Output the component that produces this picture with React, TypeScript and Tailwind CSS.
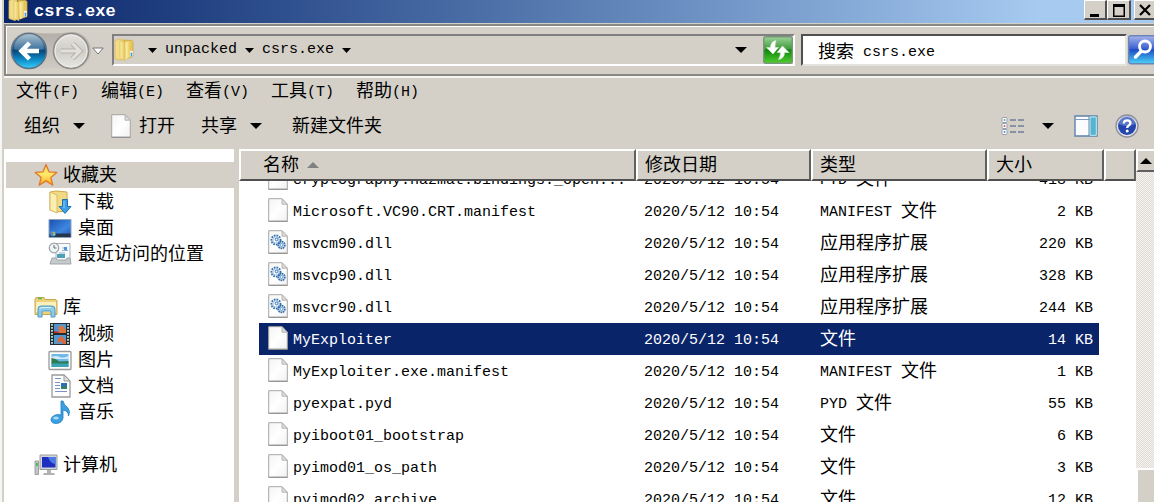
import React from 'react';
import { clsx } from 'clsx';

interface FileEntry {
  name: string;
  type: string;
  size: string;
  icon?: 'page' | 'dll';
  selected?: boolean;
}

interface NavItem {
  label: string;
  icon: React.ReactNode;
}

interface NavGroup extends NavItem {
  active?: boolean;
  items: NavItem[];
}

const files: FileEntry[] = [
  { name: 'cryptography.hazmat.bindings._open...', type: 'PYD 文件', size: '418 KB' },
  { name: 'Microsoft.VC90.CRT.manifest', type: 'MANIFEST 文件', size: '2 KB' },
  { name: 'msvcm90.dll', type: '应用程序扩展', size: '220 KB', icon: 'dll' },
  { name: 'msvcp90.dll', type: '应用程序扩展', size: '328 KB', icon: 'dll' },
  { name: 'msvcr90.dll', type: '应用程序扩展', size: '244 KB', icon: 'dll' },
  { name: 'MyExploiter', type: '文件', size: '14 KB', selected: true },
  { name: 'MyExploiter.exe.manifest', type: 'MANIFEST 文件', size: '1 KB' },
  { name: 'pyexpat.pyd', type: 'PYD 文件', size: '55 KB' },
  { name: 'pyiboot01_bootstrap', type: '文件', size: '6 KB' },
  { name: 'pyimod01_os_path', type: '文件', size: '3 KB' },
  { name: 'pyimod02_archive', type: '文件', size: '12 KB' },
];

const modified = '2020/5/12 10:54';

const menus = ['文件(F)', '编辑(E)', '查看(V)', '工具(T)', '帮助(H)'];

// Chinese runs are set larger than the monospaced Latin ones
const Label: React.FC<{ text: string }> = ({ text }) => (
  <span className="pt-0.5">
    {text.split(/([\u4e00-\u9fff]+)/).filter(Boolean).map((part, i) => (
      <span key={i} className={/[\u4e00-\u9fff]/.test(part) ? 'align-[-1px] text-[18px]' : 'text-[15px]'}>
        {part}
      </span>
    ))}
  </span>
);

const Caret: React.FC<{ small?: boolean }> = ({ small }) => (
  <svg className={small ? 'h-[5px] w-[9px]' : 'h-[6px] w-[12px]'} viewBox="0 0 12 6" preserveAspectRatio="none">
    <path d="M0 0h12L6 6z" fill="#000" />
  </svg>
);

const FolderIcon: React.FC<{ className?: string }> = ({ className }) => (
  <svg className={className} viewBox="0 0 20 24">
    <defs>
      <linearGradient id="folderFront" x1="0" x2="1">
        <stop offset="0" stopColor="#fdf3b4" />
        <stop offset="1" stopColor="#e6c14c" />
      </linearGradient>
    </defs>
    <path d="M1 2.500l5-1.500 3 1v19l-2 1.500-6-2z" fill="#f3dc86" stroke="#d8bb5c" strokeWidth=".8" />
    <path d="M10 2l8 .5 1 1v15l-7 2.500z" fill="#e9c85c" stroke="#cba640" strokeWidth=".8" />
    <path d="M6 2.500l5 2v18l-5-2z" fill="url(#folderFront)" stroke="#dcbf60" strokeWidth=".8" />
    <path d="M11.500 4.500l5.500-2v16l-5.500 3z" fill="url(#folderFront)" />
    <path d="M17.500 13v5.500" stroke="#fff" strokeWidth="2.600" />
    <path d="M17.500 14.500v4" stroke="#3d9ddc" strokeWidth="1.600" />
  </svg>
);

const PageIcon: React.FC<{ className?: string; dll?: boolean }> = ({ className, dll }) => (
  <svg className={className} viewBox="0 0 20 24">
    <defs>
      <linearGradient id="pageFill" x1="0" y1="0" x2="1" y2="1">
        <stop offset="0" stopColor="#f4f4f4" />
        <stop offset=".5" stopColor="#fff" />
        <stop offset="1" stopColor="#f1f1f1" />
      </linearGradient>
    </defs>
    <path d="M.7.7H14l5.3 5.5v17H.7z" fill="url(#pageFill)" stroke="#a6a6a6" />
    <path d="M14 .7v5.5h5.3z" fill="#dcdcdc" stroke="#b4b4b4" />
    <path d="M.5 23.3h19" stroke="#8b8b8b" />
    {dll && (
      <g fill="none" stroke="#2f70b0">
        <circle cx="8" cy="10" r="4.6" strokeWidth="1.8" strokeDasharray="1.7 1" />
        <circle cx="8" cy="10" r="3.2" strokeWidth=".8" stroke="#7fa9d2" />
        <circle cx="8.500" cy="9.500" r="1.3" />
        <circle cx="13.500" cy="15" r="3.3" strokeWidth="1.800" strokeDasharray="1.600 .6" />
        <circle cx="13.500" cy="15" r="1.500" stroke="#5b92c8" />
      </g>
    )}
  </svg>
);

const StarIcon = () => (
  <svg className="size-6" viewBox="0 0 24 24">
    <defs>
      <linearGradient id="star" x1="0" y1="0" x2="0" y2="1">
        <stop offset="0" stopColor="#ffd25a" />
        <stop offset=".5" stopColor="#ffe86a" />
        <stop offset="1" stopColor="#ffa41a" />
      </linearGradient>
    </defs>
    <path d="M12 1.5l3 7.3 7.8.6-6 5 2 7.8-6.8-4.3-6.800 4.300 2-7.800-6-5 7.800-.6z" fill="url(#star)" stroke="#e0782a" strokeWidth="1.300" strokeLinejoin="round" />
  </svg>
);

const DownloadsIcon = () => (
  <svg className="size-6" viewBox="0 0 24 24">
    <path d="M2 2l6-1 11 1v19l-11 1-6-2z" fill="#f2da85" stroke="#cba94a" />
    <path d="M2 2l7 3v18l-7-3z" fill="#fbeeb2" stroke="#d2b355" strokeWidth=".8" />
    <path d="M14.500 9.500h5v7h3.500L17 23.500l-6-7h3.500z" fill="#3f9fe4" stroke="#1d6fb8" />
    <path d="M16 11v7" stroke="#8ccdf5" />
  </svg>
);

const DesktopIcon = () => (
  <svg className="size-6" viewBox="0 0 24 24">
    <defs>
      <linearGradient id="desk" x1="0" y1="0" x2="1" y2="1">
        <stop offset="0" stopColor="#1a4fb0" />
        <stop offset=".6" stopColor="#3e86e0" />
        <stop offset="1" stopColor="#2058b8" />
      </linearGradient>
    </defs>
    <path d="M1 3.500h22v18H1z" fill="url(#desk)" stroke="#8fa3bb" />
    <path d="M1.500 17.500h21V21h-21z" fill="#27364e" />
    <circle cx="5" cy="17.500" r="3" fill="#3a8fd0" />
    <path d="M3.500 16h1.500v1.500H3.500z" fill="#f26a35" />
    <path d="M5.300 16h1.500v1.500H5.300z" fill="#a3d95a" />
    <path d="M5.300 18h1.500v1.300H5.300z" fill="#ffd54a" />
  </svg>
);

const RecentIcon = () => (
  <svg className="size-6" viewBox="0 0 24 24">
    <path d="M8 1.500h14v18H8z" fill="#f8fafb" stroke="#a9b0b5" />
    <path d="M14 6h4M14 8.500h6M11 11h6" stroke="#8fb4d0" />
    <path d="M16 5h3v3h-3z" fill="#4c93dc" />
    <path d="M9 12h8v4H9z" fill="#4da0b8" />
    <path d="M2 22l2-6h4l1 2h9l1-2h3l1 6z" fill="#c5c9cc" stroke="#a1a6aa" />
    <circle cx="6" cy="6" r="4.800" fill="#f1f4f6" stroke="#9ba4aa" strokeWidth="1.200" />
    <path d="M6 3v3h2.500" stroke="#5d6a74" fill="none" />
  </svg>
);

const LibraryIcon = () => (
  <svg className="size-6" viewBox="0 0 24 24">
    <path d="M1 4.500l1-2h8l1 2h11l1 1v14H1z" fill="#ecd27a" stroke="#c7a750" />
    <path d="M2 7h20v10H2z" fill="#fbefbb" />
    <path d="M4 3.500h4" stroke="#57b84a" strokeWidth="1.500" />
    <path d="M4 22v-8q0-3 3-3h11q3 0 3 3v8h-4v-5q0-1-1-1H9q-1 0-1 1v5z" fill="#8dcbe8" stroke="#4e9ac2" />
    <path d="M6 14q0-1.500 2-1.500h9" stroke="#d5f0fb" fill="none" />
  </svg>
);

const VideoIcon = () => (
  <svg className="size-6" viewBox="0 0 24 24">
    <path d="M2 1h20v22H2z" fill="#252b30" />
    <path d="M6 2h12v9H6zM6 13h12v9H6z" fill="#4c9bd6" />
    <path d="M6 2h3l3 4 6 1v4H6z" fill="#5a8fc4" />
    <path d="M11 5l3-2 4 5v3h-7z" fill="#e0743e" />
    <path d="M9 22l1-6 4-2 4 5v3h-3l-2-3z" fill="#d9683a" />
    <path d="M6 9l5 1v1H6z" fill="#c92c2c" />
    <path d="M4 2v21M20 2v21" stroke="#a9d3cc" strokeWidth="2" strokeDasharray="1.800 1.200" />
  </svg>
);

const PictureIcon = () => (
  <svg className="size-6" viewBox="0 0 24 24">
    <rect x="1" y="3.500" width="22" height="18" rx="1" fill="#fdfdfd" stroke="#9a9a9a" strokeWidth="1.300" />
    <path d="M3.500 6h17v13h-17z" fill="#6fb8ea" />
    <path d="M3.500 9q5-2 8 0t9-1v3h-17z" fill="#d3ecf8" />
    <path d="M3.500 10q4 0 8 3.500l9-.5v3h-17z" fill="#2c7d50" />
    <path d="M3.500 15.500h17V19h-17z" fill="#3aa3b4" />
  </svg>
);

const DocumentIcon = () => (
  <svg className="size-6" viewBox="0 0 24 24">
    <path d="M4 1h12l6 6v16H4z" fill="#fdfdfd" stroke="#9a9a9a" strokeWidth="1.300" />
    <path d="M16 1v6h6z" fill="#e0e0e0" stroke="#9a9a9a" />
    <path d="M7 4.500h6M7 8.500h5M7 11.500h5M7 14.500h5M7 17.500h12" stroke="#7b94c4" strokeWidth="1.200" />
    <path d="M13 9h6v6h-6z" fill="#2f6db5" />
    <path d="M13 13l6-1v3h-6z" fill="#30845e" />
  </svg>
);

const MusicIcon = () => (
  <svg className="size-6" viewBox="0 0 24 24">
    <path d="M13 1h2q1 4 4.500 6.500 3.500 3.500 1 8.500 0-5-5.500-6v8q-1 5-6.500 5.500Q3 23.500 3 19.500 4 15 10 14.500q2 0 3 .6z" fill="#3ba0e0" stroke="#1f7fc4" strokeWidth=".8" />
    <ellipse cx="8" cy="18" rx="2.800" ry="1.600" fill="#a5dcf8" />
  </svg>
);

const ComputerIcon = () => (
  <svg className="size-6" viewBox="0 0 24 24">
    <path d="M1 8h3.500v13.500H1z" fill="#c3c6c8" stroke="#8c9092" strokeWidth=".8" />
    <path d="M2 10h1.800v3H2z" fill="#3fc43c" />
    <path d="M6 2h17v14.500H6z" fill="#d2d5d7" stroke="#989c9f" />
    <path d="M8 4h13.500v10.500H8z" fill="#1c2fc0" />
    <path d="M14 4h7.500v7q-5 0-7.500-7z" fill="#4d7ae8" />
    <path d="M13 17h4v3h3l1 2H9l1-2h3z" fill="#aeb2b4" />
  </svg>
);

const groups: NavGroup[] = [
  {
    label: '收藏夹',
    icon: <StarIcon />,
    active: true,
    items: [
      { label: '下载', icon: <DownloadsIcon /> },
      { label: '桌面', icon: <DesktopIcon /> },
      { label: '最近访问的位置', icon: <RecentIcon /> },
    ],
  },
  {
    label: '库',
    icon: <LibraryIcon />,
    items: [
      { label: '视频', icon: <VideoIcon /> },
      { label: '图片', icon: <PictureIcon /> },
      { label: '文档', icon: <DocumentIcon /> },
      { label: '音乐', icon: <MusicIcon /> },
    ],
  },
  { label: '计算机', icon: <ComputerIcon />, items: [] },
];

const NavButtons = () => (
  <svg className="h-10 w-[82px]" viewBox="0 0 82 40">
    <defs>
      <linearGradient id="back" x1="0" y1="0" x2="0" y2="1">
        <stop offset="0" stopColor="#9db4c8" />
        <stop offset=".4" stopColor="#1f5c8c" />
        <stop offset=".5" stopColor="#084a7c" />
        <stop offset=".75" stopColor="#0f8cc8" />
        <stop offset="1" stopColor="#38d0fa" />
      </linearGradient>
      <linearGradient id="forward" x1="0" y1="0" x2="0" y2="1">
        <stop offset="0" stopColor="#e4e2de" />
        <stop offset=".5" stopColor="#d0cdc7" />
        <stop offset="1" stopColor="#e9e7e3" />
      </linearGradient>
      <linearGradient id="pill" x1="0" y1="0" x2="0" y2="1">
        <stop offset="0" stopColor="#b3afa8" />
        <stop offset="1" stopColor="#d0ccc5" />
      </linearGradient>
    </defs>
    <path d="M19 1q22 3 43 0a19 19 0 0 1 0 38q-21-3-43 0a19 19 0 0 1 0-38z" fill="url(#pill)" />
    <circle cx="19" cy="20" r="17.500" fill="url(#back)" stroke="#5d7488" strokeWidth="1.500" />
    <path d="M4 18a15 15 0 0 1 30 0q-15 4-30 0z" fill="#fff" opacity=".2" />
    <path d="M29 20H13M19.500 12L11.500 20l8 8" fill="none" stroke="#fff" strokeWidth="4.500" />
    <circle cx="61" cy="20" r="17.500" fill="url(#forward)" stroke="#8e8c88" strokeWidth="1.500" />
    <circle cx="61" cy="20" r="16" fill="none" stroke="#efeeec" />
    <path d="M51 20h17M62.500 12.500L70 20l-7.500 7.500" fill="none" stroke="#b5b2ad" strokeWidth="5" />
    <path d="M51 20h17M62.500 12.500L70 20l-7.500 7.500" fill="none" stroke="#e2e0dc" strokeWidth="3" />
  </svg>
);

const captionButton =
  'flex h-5 items-center justify-center border-t border-l border-t-white border-l-white border-b-2 border-b-[#505050] bg-[#d4d0c8]';

const TitleBar = () => (
  <header className="flex h-6 shrink-0 items-start border-b border-[#d4d0c8] bg-linear-to-r from-[#0a246a] to-[#a6caf0] to-90%">
    <FolderIcon className="-mt-0.5 ml-1 h-6 w-5" />
    <h1 className="ml-1.5 flex-1 text-[17px] leading-6 font-bold text-white">csrs.exe</h1>
    <button aria-label="最小化" className={clsx(captionButton, 'w-[23px] border-r-2 border-r-[#505050]')}>
      <svg className="h-4 w-4" viewBox="0 0 16 16"><path d="M3 12h9v3H3z" /></svg>
    </button>
    <button aria-label="最大化" className={clsx(captionButton, 'w-6 border-r-2 border-r-[#505050]')}>
      <svg className="h-4 w-4" viewBox="0 0 16 16"><path d="M2 2h12v13H2zM3.500 5v8.500h9V5z" fillRule="evenodd" /></svg>
    </button>
    <button aria-label="关闭" className={clsx(captionButton, 'ml-[3px] w-5')}>
      <svg className="h-4 w-4" viewBox="0 0 16 16"><path d="M3 3l10 10M13 3L3 13" stroke="#000" strokeWidth="2.200" /></svg>
    </button>
  </header>
);

const AddressBar = () => (
  <div className="flex h-[52px] shrink-0 items-center border-y-2 border-l-2 border-t-[#8a8884] border-b-[#8a8884] border-l-[#8a8884] bg-[#d4d0c8] shadow-[inset_1px_1px_0_#fff,0_2px_0_#f4f3f0]">
    <div className="ml-1 flex items-center pt-0.5">
      <NavButtons />
      <button aria-label="最近浏览">
        <svg className="h-2 w-3" viewBox="0 0 12 8"><path d="M.8 1h10.400L6 7z" fill="#fff" stroke="#77777a" /></svg>
      </button>
    </div>
    <div className="ml-2 flex h-8 flex-1 items-center border-2 border-t-[#808080] border-r-white border-b-white border-l-[#808080]">
      <FolderIcon className="h-6 w-5" />
      <nav className="ml-[14px] flex flex-1 items-center gap-2">
        <Caret small />
        <button className="text-[15px] leading-5">unpacked</button>
        <Caret small />
        <button className="text-[15px] leading-5">csrs.exe</button>
        <Caret small />
      </nav>
      <button aria-label="历史记录" className="mr-4"><Caret /></button>
      <button aria-label="刷新">
        <svg className="h-7 w-[30px]" viewBox="0 0 30 28">
          <defs>
            <linearGradient id="refresh" x1="0" y1="0" x2="0" y2="1">
              <stop offset="0" stopColor="#9fd39b" />
              <stop offset=".45" stopColor="#3f9d3a" />
              <stop offset=".5" stopColor="#12840f" />
              <stop offset="1" stopColor="#4fd02f" />
            </linearGradient>
          </defs>
          <rect x=".7" y=".7" width="28.600" height="26.600" rx="2" fill="url(#refresh)" stroke="#77967a" strokeWidth="1.400" />
          <path d="M13 4.500Q7.500 5.500 7.500 11.500H3.500L10 18l5.500-6.500H12q0-4 1-7z" fill="#fff" stroke="#d8ecd5" strokeWidth=".6" />
          <path d="M15.500 23.500q6-1 6-7h4.500L19.500 10 14 16.500h3.500q0 4-2 7z" fill="#fff" stroke="#d8ecd5" strokeWidth=".6" />
        </svg>
      </button>
    </div>
    <div className="ml-1.5 flex h-8 w-[326px] items-center gap-[9px] border-2 border-t-[#505050] border-r-[#e4e2dd] border-b-[#e4e2dd] border-l-[#505050] bg-white pt-1.5 pl-[15px]">
      <label htmlFor="search" className="text-[18px] leading-6">搜索</label>
      <input id="search" type="text" defaultValue="csrs.exe" className="min-w-0 flex-1 bg-transparent text-[15px] leading-6 outline-none" />
    </div>
    <button aria-label="搜索" className="ml-px">
      <svg className="h-[30px] w-[26px]" viewBox="0 0 26 30">
        <defs>
          <linearGradient id="search-fill" x1="0" y1="0" x2="0" y2="1">
            <stop offset="0" stopColor="#a9b6ec" />
            <stop offset=".45" stopColor="#3f62d4" />
            <stop offset=".5" stopColor="#1f4cc4" />
            <stop offset="1" stopColor="#48d4f6" />
          </linearGradient>
        </defs>
        <rect x=".7" y=".7" width="30" height="28" rx="2" fill="url(#search-fill)" stroke="#6b84b8" strokeWidth="1.400" />
        <path d="M13 16.500L7.500 22" stroke="#fff" strokeWidth="3.500" strokeLinecap="round" />
        <circle cx="17" cy="11.500" r="5.500" fill="none" stroke="#fff" strokeWidth="2.800" />
      </svg>
    </button>
  </div>
);

const Toolbar = () => (
  <div className="flex h-11 shrink-0 items-center pr-[15px] pb-0.5 pl-5 leading-6">
    <button className="flex items-center gap-[13px]"><Label text="组织" /><Caret /></button>
    <button className="ml-[26px] flex items-center gap-2">
      <PageIcon className="h-6 w-5" />
      <Label text="打开" />
    </button>
    <button className="ml-[26px] flex items-center gap-[13px]"><Label text="共享" /><Caret /></button>
    <button className="ml-[30px] flex"><Label text="新建文件夹" /></button>
    <div className="ml-auto flex items-center">
      <button aria-label="更改视图">
        <svg className="h-5 w-6" viewBox="0 0 24 20">
          <path d="M9 4h6M17 4h6M9 10h6M17 10h6M9 16h6M17 16h6" stroke="#6d7f99" strokeWidth="1.500" />
          <g fill="#fff" stroke="#94a1b3">
            <rect x="1" y="1.500" width="5" height="5" rx="1" />
            <rect x="1" y="7.500" width="5" height="5" rx="1" />
            <rect x="1" y="13.500" width="5" height="5" rx="1" />
          </g>
          <path d="M2.700 3.200h1.600v1.600H2.700z" fill="#4a9b68" />
          <path d="M2.700 9.200h1.600v1.600H2.700z" fill="#e2382f" />
          <path d="M2.700 15.200h1.600v1.600H2.700z" fill="#3f77d6" />
        </svg>
      </button>
      <button aria-label="更多选项" className="ml-[17px]"><Caret /></button>
      <button aria-label="预览窗格" className="ml-5">
        <svg className="h-[22px] w-6" viewBox="0 0 24 22">
          <path d="M1 1h22v20H1z" fill="#fbfcfd" stroke="#5f83ab" strokeWidth="1.400" />
          <path d="M1.700 4.500h14" stroke="#7d9cc0" />
          <path d="M16 2h6.300v18.300H16z" fill="#55b4cf" stroke="#bfe9f2" />
          <path d="M15 1v20" stroke="#5f83ab" />
        </svg>
      </button>
      <button aria-label="获取帮助" className="ml-[17px]">
        <svg className="size-6" viewBox="0 0 24 24">
          <circle cx="12" cy="12" r="11" fill="#e1e3e8" stroke="#8b8f98" strokeWidth="1.300" />
          <circle cx="12" cy="12" r="9" fill="#2446ac" />
          <path d="M4 10a8 8 0 0 1 16 0q-8 4-16 0z" fill="#7c96da" opacity=".6" />
          <path d="M8.800 9.500q0-3.200 3.300-3.200t3.300 2.800q0 1.500-1.700 2.500-1.500.9-1.500 2.400" fill="none" stroke="#fff" strokeWidth="2.300" />
          <circle cx="12.200" cy="17" r="1.500" fill="#fff" />
        </svg>
      </button>
    </div>
  </div>
);

const Sidebar = () => (
  <aside className="flex w-[230px] shrink-0 flex-col gap-[27px] overflow-hidden bg-white pt-[13px]">
    {groups.map((group) => (
      <section key={group.label}>
        <button
          className={clsx(
            'mb-px ml-0.5 flex h-[26px] w-full items-center gap-[5px] pl-7',
            group.active && 'bg-[#d4d0c8]'
          )}
        >
          {group.icon}
          <Label text={group.label} />
        </button>
        {group.items.map((item) => (
          <button key={item.label} className="flex h-[26px] w-full items-center gap-1.5 pl-11">
            {item.icon}
            <Label text={item.label} />
          </button>
        ))}
      </section>
    ))}
  </aside>
);

const headCell =
  'flex h-8 items-center border-2 border-t-white border-l-white border-r-[#606060] border-b-[#505050] bg-[#d4d0c8] pl-[7px] text-left leading-6 font-normal';

const FileTable = () => (
  <table className="block min-w-0 flex-1 overflow-hidden bg-white">
    <thead className="relative z-10 block">
      <tr className="grid h-8 grid-cols-[minmax(0,1fr)_175px_176px_117px_32px]">
        <th className={clsx(headCell, 'gap-2')}>
          <span className="flex pl-[15px]"><Label text="名称" /></span>
          <svg className="h-1.5 w-3" viewBox="0 0 12 6"><path d="M6 0l6 6H0z" fill="#808080" /></svg>
        </th>
        <th className={headCell}><Label text="修改日期" /></th>
        <th className={headCell}><Label text="类型" /></th>
        <th className={headCell}><Label text="大小" /></th>
        <th className={headCell} aria-label="其他" />
      </tr>
    </thead>
    {/* scrolled: the first row slides under the header */}
    <tbody className="-mt-[18px] block">
      {files.map((file) => (
        <tr
          key={file.name}
          className={clsx(
            'mr-[37px] ml-5 grid h-8 grid-cols-[minmax(0,1fr)_175px_176px_112px] items-start leading-6 whitespace-nowrap',
            file.selected && 'bg-[#0a246a] text-white'
          )}
        >
          <td className="flex gap-[5px] pt-[3px] pl-[9px]">
            <PageIcon className="h-6 w-5 shrink-0" dll={file.icon === 'dll'} />
            <Label text={file.name} />
          </td>
          <td className="pt-[5px] pl-2"><Label text={modified} /></td>
          <td className="pt-[5px] pl-[9px]"><Label text={file.type} /></td>
          <td className="pt-[5px] pr-1.5 text-right"><Label text={file.size} /></td>
        </tr>
      ))}
    </tbody>
  </table>
);

const ScrollBar = () => (
  <div className="flex w-[18px] shrink-0 flex-col">
    <button
      aria-label="向上滚动"
      className="flex h-[23px] items-center justify-center border-t-2 border-b-2 border-l-2 border-t-white border-b-[#606060] border-l-white bg-[#d4d0c8]"
    >
      <svg className="h-1.5 w-3" viewBox="0 0 12 6"><path d="M6 0l6 6H0z" /></svg>
    </button>
    <div className="flex-1 bg-[conic-gradient(#dfdcd6_25%,#f4f3f0_0_50%,#dfdcd6_0_75%,#f4f3f0_0)] bg-size-[2px_2px]" />
    <div className="h-[34px] border-t-2 border-l-2 border-white bg-[#d4d0c8]" />
  </div>
);

const App: React.FC = () => {
  return (
    <div className="h-screen overflow-hidden border-l-2 border-[#f6f6f4] bg-[#d4d0c8] pl-0.5 font-['Liberation_Mono','Noto_Sans_CJK_SC',monospace] text-black">
      <div className="flex h-full flex-col">
        <TitleBar />
        <AddressBar />
        <nav className="flex h-[29px] shrink-0 items-end gap-[22px] pl-3 leading-6">
          {menus.map((menu) => (
            <button key={menu}><Label text={menu} /></button>
          ))}
        </nav>
        <Toolbar />
        <main className="flex min-h-0 flex-1">
          <Sidebar />
          <div className="ml-[5px] flex min-w-0 flex-1">
            <FileTable />
            <ScrollBar />
          </div>
        </main>
      </div>
    </div>
  );
};

export default App;
